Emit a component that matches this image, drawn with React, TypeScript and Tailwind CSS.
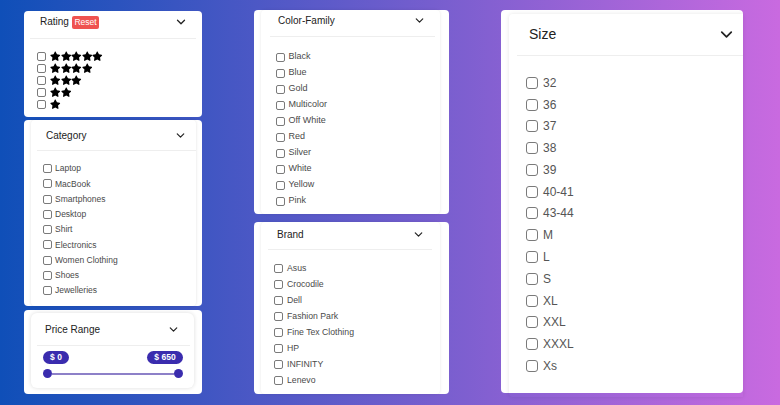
import React from "react";
import { FaStar } from "react-icons/fa";

const font = { fontFamily: '"Liberation Sans", Arial, sans-serif' };

function Chevron({ size, className }: { size: number; className?: string }) {
  return (
    <svg width={size} height={size} viewBox="0 0 24 24" fill="none" stroke="#222" strokeWidth={2.2} strokeLinecap="round" strokeLinejoin="round" className={className}>
      <path d="m6 9 6 6 6-6" />
    </svg>
  );
}

function Box({ big }: { big?: boolean }) {
  return big ? (
    <span className="inline-block w-[12px] h-[12px] border border-[#7a7a7a] rounded-[3px] bg-white shrink-0" />
  ) : (
    <span className="inline-block w-[9px] h-[9px] border border-[#7a7a7a] rounded-[2px] bg-white shrink-0" />
  );
}

const categories = ["Laptop", "MacBook", "Smartphones", "Desktop", "Shirt", "Electronics", "Women Clothing", "Shoes", "Jewelleries"];
const colors = ["Black", "Blue", "Gold", "Multicolor", "Off White", "Red", "Silver", "White", "Yellow", "Pink"];
const brands = ["Asus", "Crocodile", "Dell", "Fashion Park", "Fine Tex Clothing", "HP", "INFINITY", "Lenevo"];
const sizes = ["32", "36", "37", "38", "39", "40-41", "43-44", "M", "L", "S", "XL", "XXL", "XXXL", "Xs"];

export default function App() {
  return (
    <div style={font} className="w-[780px] h-[405px] overflow-hidden flex items-start pl-[24px] bg-[linear-gradient(to_right,#0f4fb8,#c96ae0)]">
      {/* Column 1 */}
      <div className="w-[178px] flex flex-col mt-[11px]">
        {/* Rating */}
        <div className="h-[106px] bg-white rounded px-[6px]">
          <div className="h-[22px] flex items-center justify-between pl-[10px] pr-[8px]">
            <div className="flex items-center gap-[3px]">
              <span className="text-[10px] leading-[12px] text-[#222]">Rating</span>
              <span className="bg-[#ef5350] text-white text-[8.5px] leading-[13px] h-[13px] px-[2.5px] rounded-[2px]">Reset</span>
            </div>
            <Chevron size={14} />
          </div>
          <div className="h-px bg-[#eee] mt-[5px]" />
          <div className="mt-[11px] pl-[7px] flex flex-col">
            {[5, 4, 3, 2, 1].map((n) => (
              <div key={n} className="h-[12px] flex items-center gap-[4px]">
                <Box />
                <div className="flex">
                  {Array.from({ length: n }).map((_, i) => (
                    <FaStar key={i} size={10.5} color="#000" />
                  ))}
                </div>
              </div>
            ))}
          </div>
        </div>

        {/* Category */}
        <div className="h-[186px] bg-white rounded mt-[3px] pl-[7px] pr-[6px]">
          <div className="h-full rounded shadow-[0_0_3px_rgba(0,0,0,0.12)]">
            <div className="h-[30px] flex items-center justify-between pl-[15px] pr-[9px]">
              <span className="text-[10px] text-[#222]">Category</span>
              <Chevron size={13} />
            </div>
            <div className="h-px bg-[#eee] ml-[6px]" />
            <div className="mt-[10px] pl-[12px] flex flex-col">
              {categories.map((c) => (
                <div key={c} className="h-[15.25px] flex items-center gap-[3px]">
                  <Box />
                  <span className="text-[8.5px] text-[#4a4a4a]">{c}</span>
                </div>
              ))}
            </div>
          </div>
        </div>

        {/* Price Range */}
        <div className="h-[84px] bg-white rounded mt-[4px] pt-[3px] pl-[7px] pr-[8px]">
          <div className="h-[75px] rounded-md shadow-[0_0_4px_rgba(0,0,0,0.14)]">
            <div className="h-[32px] flex items-center justify-between pl-[14px] pr-[14px]">
              <span className="text-[10px] text-[#222]">Price Range</span>
              <Chevron size={13} />
            </div>
            <div className="h-px bg-[#eee] ml-[6px] mr-[4px]" />
            <div className="px-[12px] mr-[-1px]">
              <div className="mt-[5px] flex justify-between">
                <span className="h-[13px] w-[26px] rounded-full bg-[#3a2cae] text-white text-[8.5px] font-bold leading-[13px] text-center">$ 0</span>
                <span className="h-[13px] w-[36px] rounded-full bg-[#3a2cae] text-white text-[8.5px] font-bold leading-[13px] text-center">$ 650</span>
              </div>
              <div className="mt-[5px] h-[9px] flex items-center">
                <span className="w-[9px] h-[9px] rounded-full bg-[#3a2cae] shrink-0" />
                <span className="flex-1 h-[2px] bg-[#8d80c8]" />
                <span className="w-[9px] h-[9px] rounded-full bg-[#3a2cae] shrink-0" />
              </div>
            </div>
          </div>
        </div>
      </div>

      {/* Column 2 */}
      <div className="w-[195px] ml-[52px] mt-[10px] flex flex-col">
        {/* Color-Family */}
        <div className="h-[204px] bg-white rounded pl-[7px] pr-[9px]">
          <div className="h-full rounded shadow-[0_0_3px_rgba(0,0,0,0.1)]">
            <div className="h-[20px] flex items-center justify-between pl-[17px] pr-[14px]">
              <span className="text-[10px] text-[#222]">Color-Family</span>
              <Chevron size={13} />
            </div>
            <div className="h-px bg-[#eee] mt-[6px] ml-[9px] mr-[5px]" />
            <div className="mt-[12px] pl-[15px] flex flex-col">
              {colors.map((c) => (
                <div key={c} className="h-[16px] flex items-center gap-[3.5px]">
                  <Box />
                  <span className="text-[9px] text-[#4a4a4a]">{c}</span>
                </div>
              ))}
            </div>
          </div>
        </div>

        {/* Brand */}
        <div className="h-[172px] bg-white rounded mt-[8px] pl-[7px] pr-[9px]">
          <div className="h-full rounded shadow-[0_0_3px_rgba(0,0,0,0.1)]">
            <div className="h-[24px] flex items-center justify-between pl-[16px] pr-[15px]">
              <span className="text-[10px] text-[#222]">Brand</span>
              <Chevron size={13} />
            </div>
            <div className="h-px bg-[#eee] mt-[3px] ml-[7px] mr-[8px]" />
            <div className="mt-[11px] pl-[13px] flex flex-col">
              {brands.map((c) => (
                <div key={c} className="h-[15.9px] flex items-center gap-[4px]">
                  <Box />
                  <span className="text-[8.7px] text-[#4a4a4a]">{c}</span>
                </div>
              ))}
            </div>
          </div>
        </div>
      </div>

      {/* Column 3 */}
      <div className="w-[242px] h-[383px] ml-[52px] mt-[10px] bg-white rounded pl-[8px]">
        <div className="h-full rounded-l shadow-[0_0_4px_rgba(0,0,0,0.1)]">
          <div className="h-[40px] mt-[4px] flex items-center justify-between pl-[20px] pr-[7px]">
            <span className="text-[14px] text-[#222]">Size</span>
            <Chevron size={19} />
          </div>
          <div className="h-px bg-[#eee] mt-[1px] ml-[8px]" />
          <div className="mt-[16px] pl-[17px] flex flex-col">
            {sizes.map((s) => (
              <div key={s} className="h-[21.77px] flex items-center gap-[5px]">
                <Box big />
                <span className="text-[12px] text-[#555]">{s}</span>
              </div>
            ))}
          </div>
        </div>
      </div>
    </div>
  );
}
